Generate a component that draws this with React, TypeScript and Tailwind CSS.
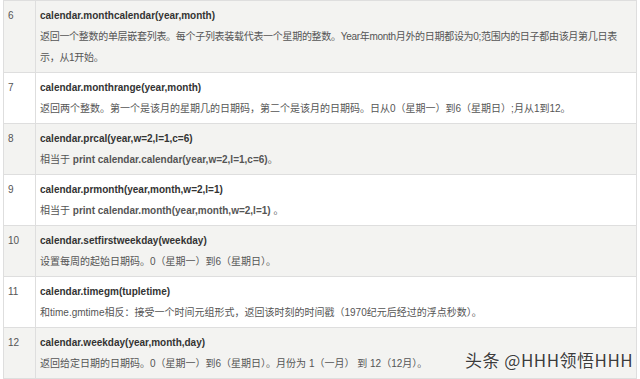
import type { ReactNode } from "react";

type api_row = {
  num: string;
  title: string;
  desc: ReactNode;
  tight?: boolean;
};

const ROWS: api_row[] = [
  {
    num: "6",
    title: "calendar.monthcalendar(year,month)",
    desc: "返回一个整数的单层嵌套列表。每个子列表装载代表一个星期的整数。Year年month月外的日期都设为0;范围内的日子都由该月第几日表示，从1开始。",
    tight: true,
  },
  {
    num: "7",
    title: "calendar.monthrange(year,month)",
    desc: "返回两个整数。第一个是该月的星期几的日期码，第二个是该月的日期码。日从0（星期一）到6（星期日）;月从1到12。",
  },
  {
    num: "8",
    title: "calendar.prcal(year,w=2,l=1,c=6)",
    desc: (
      <>
        相当于 <b className="font-bold">print calendar.calendar(year,w=2,l=1,c=6)</b>。
      </>
    ),
  },
  {
    num: "9",
    title: "calendar.prmonth(year,month,w=2,l=1)",
    desc: (
      <>
        相当于 <b className="font-bold">print calendar.month(year,month,w=2,l=1)</b> 。
      </>
    ),
  },
  {
    num: "10",
    title: "calendar.setfirstweekday(weekday)",
    desc: "设置每周的起始日期码。0（星期一）到6（星期日）。",
  },
  {
    num: "11",
    title: "calendar.timegm(tupletime)",
    desc: "和time.gmtime相反：接受一个时间元组形式，返回该时刻的时间戳（1970纪元后经过的浮点秒数）。",
  },
  {
    num: "12",
    title: "calendar.weekday(year,month,day)",
    desc: "返回给定日期的日期码。0（星期一）到6（星期日）。月份为 1（一月） 到 12（12月）。",
  },
];

export default function App() {
  return (
    <div className="relative h-[379px] w-[640px] overflow-hidden bg-white">
      <div className="ml-[3px] w-[634px] border border-[#dedede] font-['Liberation_Sans','Noto_Sans_CJK_SC',sans-serif] text-[10px] leading-[21px]">
        {ROWS.map((row, index) => (
          <div
            key={row.num}
            className={
              index % 2 === 0
                ? "grid grid-cols-[32px_1fr] border-b border-[#dedede] bg-[#f3f3f1] last:border-b-0"
                : "grid grid-cols-[32px_1fr] border-b border-[#dedede] bg-white last:border-b-0"
            }
          >
            <div className="border-r border-[#dedede] px-[4px] py-[4px] text-[#555]">
              {row.num}
            </div>
            <div className="py-[4px] pl-[4px] pr-[2px]">
              <p className="font-bold text-[#333]">{row.title}</p>
              <p
                className={
                  row.tight
                    ? "tracking-[-0.3px] text-[#555]"
                    : "text-[#555]"
                }
              >
                {row.desc}
              </p>
            </div>
          </div>
        ))}
      </div>

      <div className="absolute left-[465px] top-[350px] font-['Noto_Sans_CJK_SC',sans-serif] text-[17px] leading-[20px] tracking-[0.5px] text-[#3c3c3c] [text-shadow:0_0_2px_#fff,0_0_1px_#fff]">
        头条 @HHH领悟HHH
      </div>
    </div>
  );
}
